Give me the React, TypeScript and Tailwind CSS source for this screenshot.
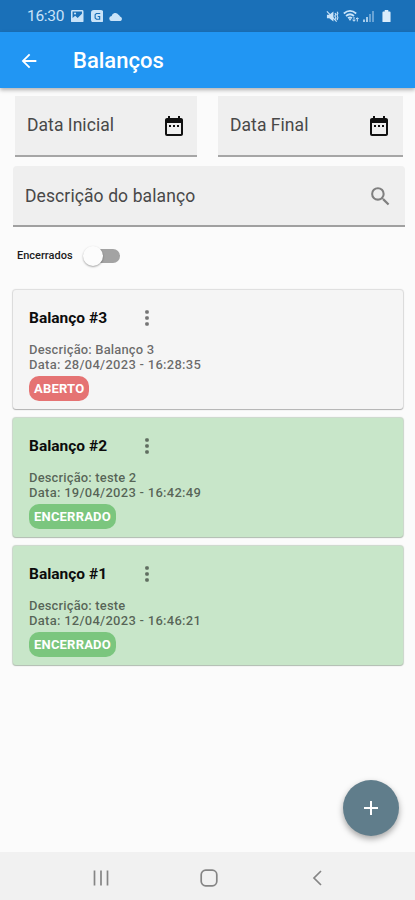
import React from "react";

type Balance = {
  id: number;
  description: string;
  date: string;
  closed: boolean;
};

const balances: Balance[] = [
  { id: 3, description: "Balanço 3", date: "28/04/2023 - 16:28:35", closed: false },
  { id: 2, description: "teste 2", date: "19/04/2023 - 16:42:49", closed: true },
  { id: 1, description: "teste", date: "12/04/2023 - 16:46:21", closed: true },
];

function StatusBar() {
  return (
    <div className="flex h-8 shrink-0 items-center bg-[#1a70b8] pl-[27px] pr-[24px] text-[#c9e3f8]">
      <span className="w-[37px] whitespace-nowrap text-[15.5px] leading-8 tracking-[-0.3px]">16:30</span>
      <svg className="ml-[7px]" width="12.500" height="12.500" viewBox="0 0 13 13">
        <path fill="currentColor" fillRule="evenodd" d="M1.5 0h10A1.5 1.5 0 0 1 13 1.5v10a1.5 1.5 0 0 1-1.500 1.500h-10A1.500 1.500 0 0 1 0 11.500v-10A1.500 1.500 0 0 1 1.500 0zM1.600 1.600v6.600l2.800-2.200 2.500 2.200L11.400 4V1.600z" />
        <circle cx="4.200" cy="3.700" r="1.100" fill="currentColor" />
      </svg>
      <svg className="ml-[7px]" width="12.500" height="12.500" viewBox="0 0 13 13">
        <rect width="13" height="13" rx="3" fill="currentColor" />
        <path d="M9 4.200V3.600H5.600L4.300 5v3.300l1.300 1.300H9V6.800H7" fill="none" stroke="#1a70b8" strokeWidth="1.200" />
      </svg>
      <svg className="ml-[6px]" width="14" height="9" viewBox="0 0 14 9">
        <path d="M3 9a2.500 2.500 0 0 1-.4-5A3.800 3.800 0 0 1 9.500 2.800 3 3 0 0 1 11 4.600 2.300 2.300 0 0 1 11.500 9z" fill="currentColor" />
      </svg>
      <div className="ml-auto flex items-center">
        <svg width="13" height="13" viewBox="0 0 14 14" fill="none" stroke="currentColor">
          <path d="M1 5h2.500L8 1.500v11L3.500 9H1z" fill="currentColor" stroke="none" />
          <path d="M1 1.500l10.500 11" strokeWidth="1.200" />
          <path d="M9.500 3.500l1.300 1-1.300 2 1.300 2-1.300 2M12 2l.8 1.500-.8 2 .8 2.500-.8 3" strokeWidth="1.200" />
        </svg>
        <svg className="ml-[4px]" width="16" height="14" viewBox="0 0 16 14" fill="none" stroke="currentColor">
          <path d="M.8 4.500Q7 -.8 13.200 4.500M3 7q4-3.500 8 0M5 9.200q2-1.700 4 0" strokeWidth="1.700" />
          <path d="M5.500 9.500h3L7 12z" fill="currentColor" stroke="none" />
          <path d="M11 8v4M9.500 10.700l1.500 1.600 1.500-1.600M14.300 12.500V9M13 10l1.300-1.300L15.600 10" strokeWidth="1" />
        </svg>
        <svg className="ml-[4px]" width="11" height="12" viewBox="0 0 11 12" fill="currentColor">
          <path d="M0 9.500h2V12H0zM3 7h2v5H3z" opacity=".8" />
          <path d="M6 4h2v8H6zM9 1h2v11H9z" opacity=".45" />
        </svg>
        <svg className="ml-[8px]" width="9" height="12.500" viewBox="0 0 10 13" preserveAspectRatio="none" fill="#dcedfb">
          <path d="M3 0h4v1.500h1.500a1 1 0 0 1 1 1V12a1 1 0 0 1-1 1h-7a1 1 0 0 1-1-1V2.500a1 1 0 0 1 1-1H3z" />
        </svg>
      </div>
    </div>
  );
}

function AppBar() {
  return (
    <header className="relative z-10 flex h-[56px] shrink-0 items-center bg-[#2196f3] pl-[18px] pt-px text-white shadow-[0_2px_4px_rgba(0,0,0,0.3)]">
      <svg width="22" height="22" viewBox="0 0 24 24" fill="currentColor">
        <path d="M20 11H7.830l5.590-5.590L12 4l-8 8 8 8 1.410-1.410L7.830 13H20v-2z" />
      </svg>
      <h1 className="ml-[33px] whitespace-nowrap text-[22px] font-medium">Balanços</h1>
    </header>
  );
}

function CalendarIcon() {
  return (
    <svg width="24" height="24" viewBox="0 0 24 24" fill="#111">
      <path d="M19 4h-1V2h-2v2H8V2H6v2H5c-1.110 0-1.990.9-1.990 2L3 20a2 2 0 0 0 2 2h14c1.100 0 2-.9 2-2V6c0-1.100-.9-2-2-2zm0 16H5V9h14v11zM7 11h2v2H7zm4 0h2v2h-2zm4 0h2v2h-2z" />
    </svg>
  );
}

function DateField({ label, className }: { label: string; className: string }) {
  return (
    <div className={`flex h-[61px] items-center justify-between border-b-2 border-[#a6a6a6] bg-[#efefef] pl-3 ${className}`}>
      <span className="whitespace-nowrap text-[17.5px] tracking-[0.05px] text-[#484848]">{label}</span>
      <CalendarIcon />
    </div>
  );
}

function BalanceCard({ item }: { item: Balance }) {
  return (
    <article
      className={`h-[119px] rounded-[3px] pl-4 pt-[17px] ${
        item.closed
          ? "bg-[#c8e6c9] shadow-[0_0_1px_1px_rgba(90,130,90,0.3),0_1px_1px_rgba(0,0,0,0.15)]"
          : "bg-[#f5f5f5] shadow-[0_0_1px_1px_rgba(0,0,0,0.12),0_1px_1px_rgba(0,0,0,0.2)]"
      }`}
    >
      <div className="flex h-[22px] items-center">
        <h2 className="w-[107.500px] whitespace-nowrap text-[15.5px] font-bold leading-[22px] text-[#0c0c0c]">Balanço #{item.id}</h2>
        <svg width="20" height="22" viewBox="0 0 20 22" fill="#000" fillOpacity=".52">
          <rect x="8.200" y="3.200" width="3.600" height="3.600" rx="1.200" />
          <rect x="8.200" y="9.200" width="3.600" height="3.600" rx="1.200" />
          <rect x="8.200" y="15.200" width="3.600" height="3.600" rx="1.200" />
        </svg>
      </div>
      <div className="mt-[13px] whitespace-nowrap text-[13px] font-medium leading-[15px] text-black/58">
        <p className="tracking-[0.15px]">Descrição: {item.description}</p>
        <p className="tracking-[0.27px]">Data: {item.date}</p>
      </div>
      <span
        className={`mt-[4px] flex h-[25px] w-fit items-center rounded-[10px] px-[5px] text-[13px] font-bold tracking-[0.2px] text-white ${
          item.closed ? "bg-[#7bc67e]" : "bg-[#e57373]"
        }`}
      >
        {item.closed ? "ENCERRADO" : "ABERTO"}
      </span>
    </article>
  );
}

export default function App() {
  return (
    <div className="flex h-[900px] w-[415px] flex-col overflow-hidden bg-[#fbfbfb] font-[Roboto,sans-serif]">
      <StatusBar />
      <AppBar />
      <main className="flex min-h-0 flex-1 flex-col">
        <div className="mt-[8px] flex gap-[21px] pl-[15px]">
          <DateField label="Data Inicial" className="w-[182px] pr-[11.5px]" />
          <DateField label="Data Final" className="w-[185px] pr-[12px]" />
        </div>
        <div className="ml-[13px] mt-[9px] flex h-[61px] w-[392px] items-center justify-between rounded-t-[4px] border-b-2 border-[#a0a0a0] bg-[#efefef] pl-3 pr-3 pt-px">
          <span className="whitespace-nowrap text-[17.5px] tracking-[0.1px] text-[#484848]">Descrição do balanço</span>
          <svg width="25" height="25" viewBox="0 0 24 24" fill="#808080">
            <path d="M15.500 14h-.79l-.28-.27A6.471 6.471 0 0 0 16 9.500 6.500 6.500 0 1 0 9.500 16c1.610 0 3.090-.59 4.230-1.570l.27.28v.79l5 4.990L20.490 19l-4.990-5zm-6 0C7.010 14 5 11.990 5 9.500S7.010 5 9.500 5 14 7.010 14 9.500 11.990 14 9.500 14z" />
          </svg>
        </div>
        <div className="flex h-[58px] items-center pl-[17px]">
          <span className="w-[66px] whitespace-nowrap text-[11px] font-medium text-[#1c1c1c]">Encerrados</span>
          <div className="flex h-[22px] w-[37px] items-center">
            <div className="relative size-[20px] shrink-0 rounded-full bg-[#fcfcfc] shadow-[0_1px_2px_rgba(0,0,0,0.35)]" />
            <div className="-ml-[4px] h-[14px] w-[21px] rounded-r-full bg-[#a3a3a3]" />
          </div>
        </div>
        <div className="ml-[13px] mt-[5px] flex w-[390px] flex-col gap-[9px]">
          {balances.map((item) => (
            <BalanceCard key={item.id} item={item} />
          ))}
        </div>
        <button className="mb-[16px] ml-auto mr-[16px] mt-auto flex size-14 shrink-0 items-center justify-center rounded-full bg-[#607d8b] shadow-[0_3px_6px_rgba(0,0,0,0.35)]">
          <svg width="24" height="24" viewBox="0 0 24 24" fill="#fff">
            <path d="M19 13h-6v6h-2v-6H5v-2h6V5h2v6h6v2z" />
          </svg>
        </button>
      </main>
      <nav className="flex h-12 shrink-0 items-center bg-[#f1f1f1] pl-[92.500px] pt-[3px] text-[#858585]">
        <svg width="16" height="16" viewBox="0 0 16 16" stroke="currentColor" strokeWidth="1.700">
          <path d="M1.500 .5v15M8 .5v15M14.500 .5v15" />
        </svg>
        <svg className="ml-[91px]" width="18" height="18" viewBox="0 0 18 18" fill="none" stroke="currentColor" strokeWidth="1.700">
          <rect x="1.200" y="1.200" width="15.600" height="15.600" rx="4.500" />
        </svg>
        <svg className="ml-[94px]" width="10" height="16" viewBox="0 0 10 16" fill="none" stroke="currentColor" strokeWidth="1.700">
          <path d="M9 1L2 8l7 7" />
        </svg>
      </nav>
    </div>
  );
}
